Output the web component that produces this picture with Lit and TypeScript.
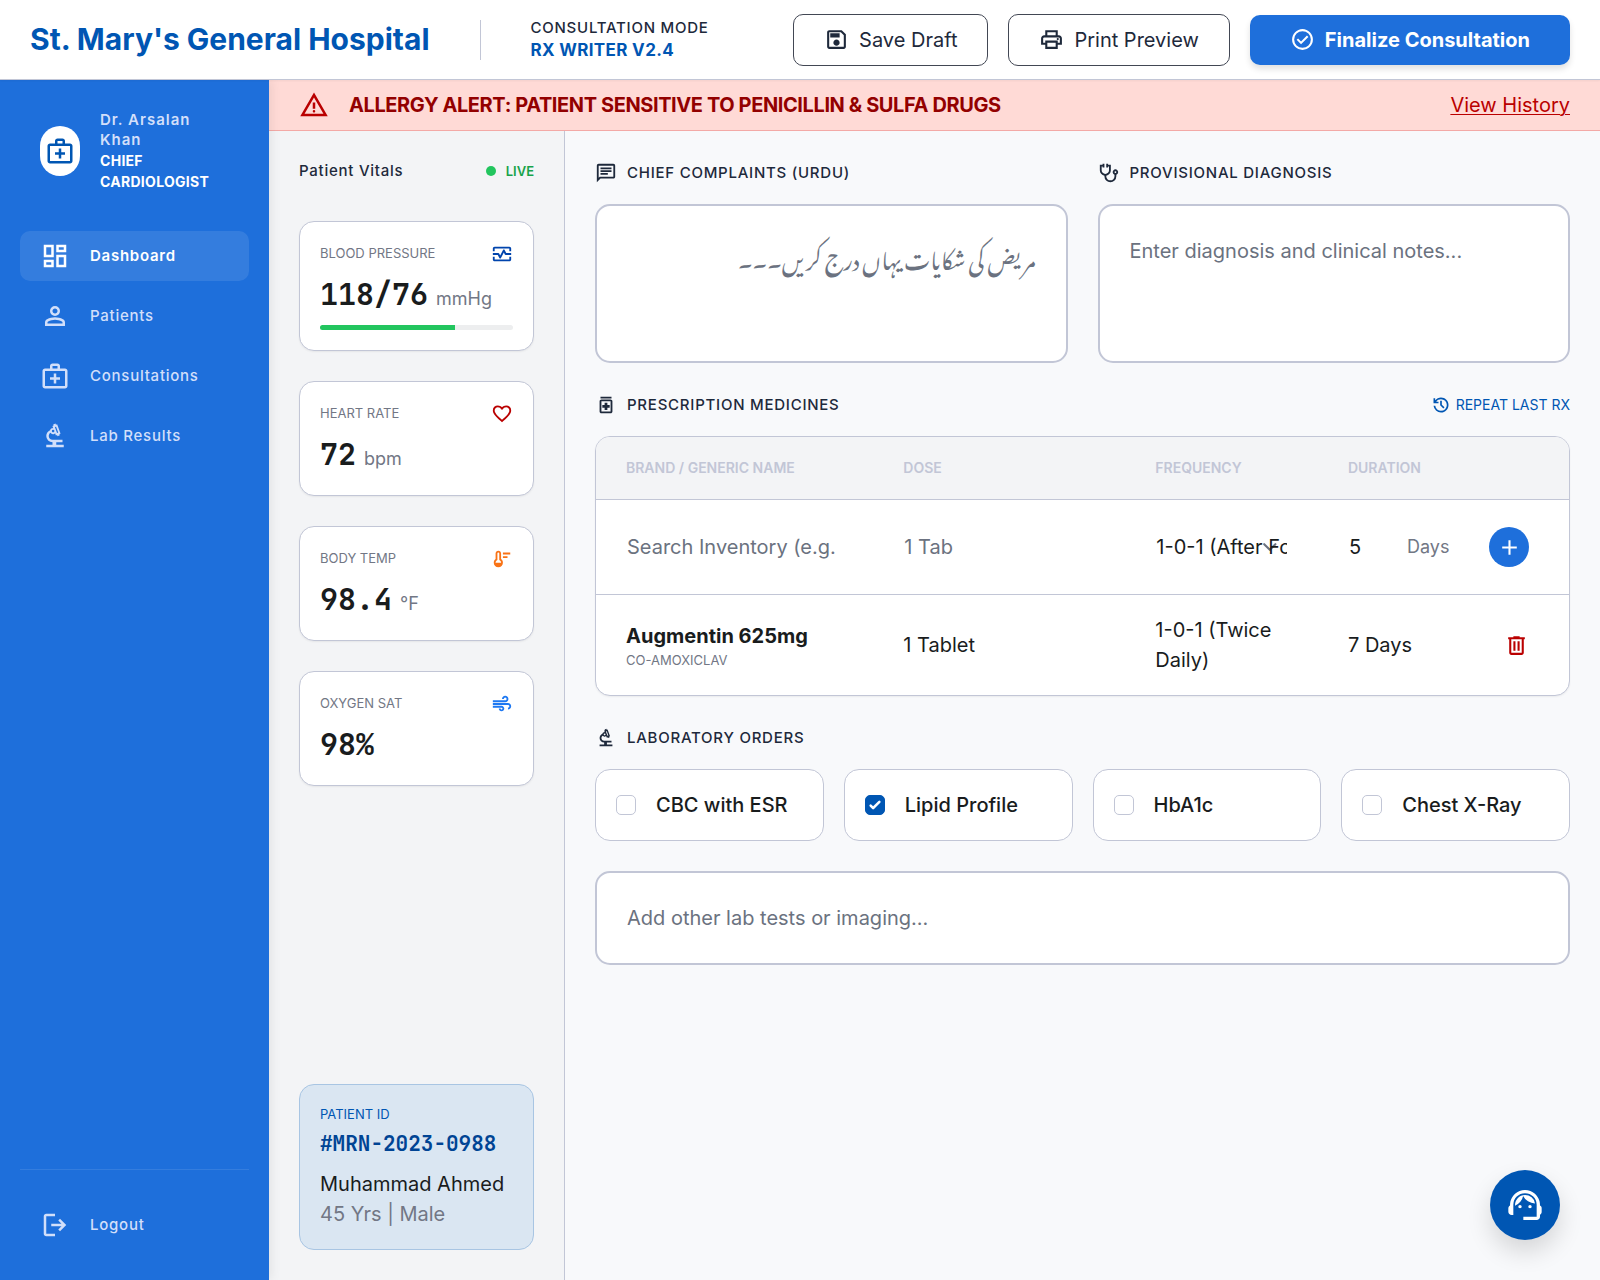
import { LitElement, html, css, svg } from "lit";
import { customElement, property, state } from "lit/decorators.js";
import { classMap } from "lit/directives/class-map.js";
import { styleMap } from "lit/directives/style-map.js";

const ICONS: Record<string, string> = {
  medical:
    "M520-560h-80v120H320v80h120v120h80v-120h120v-80H520v-120ZM160-80q-33 0-56.500-23.500T80-160v-480q0-33 23.500-56.500T160-720h160v-80q0-33 23.500-56.500T400-880h160q33 0 56.500 23.500T640-800v80h160q33 0 56.500 23.500T880-640v480q0 33-23.500 56.500T800-80H160Zm0-80h640v-480H160v480Zm240-560h160v-80H400v80Z",
  dashboard:
    "M520-600v-240h320v240H520ZM120-440v-400h320v400H120Zm400 320v-400h320v400H520Zm-400 0v-240h320v240H120Zm80-400h160v-240H200v240Zm400 320h160v-240H600v240Zm0-480h160v-80H600v80ZM200-200h160v-80H200v80Z",
  person:
    "M480-480q-66 0-113-47t-47-113q0-66 47-113t113-47q66 0 113 47t47 113q0 66-47 113t-113 47ZM160-160v-112q0-34 17.500-62.500T224-378q62-31 126-46.500T480-440q66 0 130 15.500T736-378q29 15 46.500 43.500T800-272v112H160Zm80-80h480v-32q0-11-5.500-20T700-306q-54-27-109-40.500T480-360q-56 0-111 13.500T260-306q-9 5-14.500 14t-5.500 20v32Zm240-320q33 0 56.500-23.500T560-640q0-33-23.500-56.500T480-720q-33 0-56.500 23.500T400-640q0 33 23.500 56.500T480-560Z",
  biotech:
    "M200-120v-80h200v-80q-83 0-141.500-58.500T200-480q0-61 33.500-111t89.500-73q8-34 35.500-55t61.500-21l-22-62 38-14-14-36 76-28 12 38 38-14 110 300-38 14 14 38-76 28-12-38-38 14-24-66q-15 14-34.500 21t-39.500 5q-22-2-41-13.500T336-582q-27 15-41.500 43T280-480q0 50 35 85t85 35h320v80H520v80h240v80H200Zm346-458 36-14-68-188-38 14 70 188Zm-126-22q17 0 28.500-11.500T460-640q0-17-11.500-28.500T420-680q-17 0-28.500 11.500T380-640q0 17 11.500 28.500T420-600Z",
  logout:
    "M200-120q-33 0-56.500-23.500T120-200v-560q0-33 23.500-56.500T200-840h280v80H200v560h280v80H200Zm440-160-55-58 102-102H360v-80h327L585-622l55-58 200 200-200 200Z",
  save:
    "M840-680v480q0 33-23.500 56.500T760-120H200q-33 0-56.500-23.500T120-200v-560q0-33 23.500-56.500T200-840h480l160 160Zm-80 34L646-760H200v560h560v-446ZM480-240q50 0 85-35t35-85q0-50-35-85t-85-35q-50 0-85 35t-35 85q0 50 35 85t85 35ZM240-560h360v-160H240v160Z",
  print:
    "M640-640v-120H320v120h-80v-200h480v200h-80Zm80 180q17 0 28.500-11.500T760-500q0-17-11.500-28.500T720-540q-17 0-28.500 11.500T680-500q0 17 11.500 28.500T720-460Zm-80 260v-160H320v160h320Zm80 80H240v-160H80v-240q0-51 35-85.500t85-34.500h560q51 0 85.500 34.500T880-520v240H720v160Zm80-240v-160q0-17-11.500-28.500T760-560H200q-17 0-28.500 11.500T160-520v160h80v-80h480v80h80Z",
  check:
    "m424-296 282-282-56-56-226 226-114-114-56 56 170 170Zm56 216q-83 0-156-31.500T197-197q-54-54-85.500-127T80-480q0-83 31.500-156T197-763q54-54 127-85.500T480-880q83 0 156 31.500T763-763q54 54 85.500 127T880-480q0 83-31.500 156T763-197q-54 54-127 85.500T480-80Zm0-80q134 0 227-93t93-227q0-134-93-227t-227-93q-134 0-227 93t-93 227q0 134 93 227t227 93Z",
  warning:
    "m40-120 440-760 440 760H40Zm138-80h604L480-720 178-200Zm302-40q17 0 28.500-11.500T520-280q0-17-11.500-28.500T480-320q-17 0-28.500 11.500T440-280q0 17 11.500 28.500T480-240Zm-40-120h80v-200h-80v200Z",
  chat:
    "M240-400h320v-80H240v80Zm0-120h480v-80H240v80Zm0-120h480v-80H240v80ZM80-80v-720q0-33 23.500-56.500T160-880h640q33 0 56.500 23.500T880-800v480q0 33-23.500 56.500T800-240H240L80-80Zm126-240h594v-480H160v525l46-45Z",
  stethoscope:
    "M540-80q-108 0-184-76t-76-184v-23q-86-14-143-80.500T80-600v-240h120v-40h80v160h-80v-40h-40v160q0 66 47 113t113 47q66 0 113-47t47-113v-160h-40v40h-80v-160h80v40h120v240q0 90-57 156.500T360-363v23q0 75 52.500 127.500T540-160q75 0 127.500-52.500T720-340v-67q-35-12-57.500-43T640-520q0-50 35-85t85-35q50 0 85 35t35 85q0 39-22.500 70T800-407v67q0 108-76 184T540-80Zm220-400q17 0 28.500-11.500T800-520q0-17-11.500-28.500T760-560q-17 0-28.500 11.500T720-520q0 17 11.500 28.500T760-480Z",
  medication:
    "M420-260h120v-100h100v-120H540v-100H420v100H320v120h100v100ZM280-120q-33 0-56.500-23.500T200-200v-440q0-33 23.500-56.500T280-720h400q33 0 56.500 23.500T760-640v440q0 33-23.500 56.500T680-120H280Zm0-80h400v-440H280v440Zm-40-560v-80h480v80H240Z",
  history:
    "M480-120q-138 0-240.500-91.500T122-440h82q14 104 92.500 172T480-200q117 0 198.500-81.500T760-480q0-117-81.500-198.500T480-760q-69 0-129 32t-101 88h110v80H120v-240h80v94q51-64 124.500-99T480-840q75 0 140.500 28.500t114 77q48.500 48.500 77 114T840-480q0 75-28.500 140.500t-77 114q-48.500 48.500-114 77T480-120Zm112-192L440-464v-216h80v184l128 128-56 56Z",
  add: "M440-440H200v-80h240v-240h80v240h240v80H520v240h-80v-240Z",
  trash:
    "M280-120q-33 0-56.500-23.500T200-200v-520h-40v-80h200v-40h240v40h200v80h-40v520q0 33-23.500 56.500T680-120H280Zm400-600H280v520h400v-520ZM360-280h80v-360h-80v360Zm160 0h80v-360h-80v360Z",
  pulse:
    "M80-600v-120q0-33 23.500-56.500T160-800h640q33 0 56.500 23.500T880-720v120h-80v-120H160v120H80Zm80 440q-33 0-56.500-23.500T80-240v-120h80v120h640v-120h80v120q0 33-23.500 56.500T800-160H160Zm240-120q11 0 21-6t15-16l124-248 44 88q5 10 15 16t21 6h240v-80H665l-69-138q-5-11-15-15.500t-21-4.500q-11 0-21 4.500T524-658L400-410l-44-88q-5-10-15-16t-21-6H80v80h215l69 138q5 10 15 16t21 6Z",
  heart:
    "m480-120-58-52q-101-91-167-157T150-447.500Q111-500 95.500-544T80-634q0-94 63-157t157-63q52 0 99 22t81 62q34-40 81-62t99-22q94 0 157 63t63 157q0 46-15.500 90T810-447.500Q771-395 705-329T538-172l-58 52Zm0-108q96-86 158-147.500t98-107q36-45.500 50-81t14-70.500q0-60-40-100t-100-40q-47 0-87 26.500T518-680h-76q-15-41-55-67.500T300-774q-60 0-100 40t-40 100q0 35 14 70.500t50 81q36 45.500 98 107T480-228Z",
  thermostat:
    "M520-520v-80h200v80H520Zm0-160v-80h320v80H520ZM320-120q-83 0-141.500-58.500T120-320q0-48 21-89.500t59-70.500v-240q0-50 35-85t85-35q50 0 85 35t35 85v240q38 29 59 70.500t21 89.500q0 83-58.500 141.500T320-120ZM200-320h240q0-29-12.500-54T392-416l-32-24v-280q0-17-11.500-28.500T320-760q-17 0-28.500 11.500T280-720v280l-32 24q-23 17-35.500 42T200-320Z",
  air:
    "M460-160q-50 0-85-35t-35-85h80q0 17 11.500 28.500T460-240q17 0 28.500-11.500T500-280q0-17-11.500-28.500T460-320H80v-80h380q50 0 85 35t35 85q0 50-35 85t-85 35ZM80-560v-80h540q26 0 43-17t17-43q0-26-17-43t-43-17q-26 0-43 17t-17 43h-80q0-59 40.500-99.500T620-840q59 0 99.500 40.500T760-700q0 59-40.500 99.500T620-560H80Zm660 320v-80q26 0 43-17t17-43q0-26-17-43t-43-17H80v-80h660q59 0 99.500 40.500T880-380q0 59-40.500 99.500T740-240Z",
  agent:
    "M440-120v-80h320v-284q0-117-81.500-198.500T480-764q-117 0-198.500 81.500T200-484v244h-40q-33 0-56.500-23.500T80-320v-80q0-21 10.500-39.500T120-469l3-53q8-68 39.500-126t79-101q47.500-43 109-67T480-840q68 0 129 24t109 66.500Q766-707 797-649t40 126l3 52q19 9 29.500 27t10.500 38v92q0 20-10.500 38T840-249v49q0 33-23.500 56.500T760-120H440Zm-80-280q-17 0-28.500-11.500T320-440q0-17 11.500-28.500T360-480q17 0 28.500 11.500T400-440q0 17-11.500 28.500T360-400Zm240 0q-17 0-28.500-11.500T560-440q0-17 11.500-28.500T600-480q17 0 28.500 11.500T640-440q0 17-11.500 28.500T600-400Zm-359-62q-7-106 64-182t177-76q89 0 156.500 56.500T720-519q-91-1-167.500-49T435-698q-16 80-67.500 142.500T241-462Z",
};

@customElement("ui-icon")
class UiIcon extends LitElement {
  static styles = css`
    :host {
      display: block;
      flex: none;
      width: 22px;
      height: 22px;
    }
    svg {
      display: block;
      width: 100%;
      height: 100%;
      fill: currentColor;
    }
  `;
  @property() name = "";
  render() {
    return html`<svg viewBox="0 -960 960 960" aria-hidden="true">
      ${svg`<path d=${ICONS[this.name] ?? ""}></path>`}
    </svg>`;
  }
}

interface Vital {
  label: string;
  value: string;
  unit: string;
  icon: string;
  tone: string;
  level?: number;
}

const NAV = [
  { label: "Dashboard", icon: "dashboard" },
  { label: "Patients", icon: "person" },
  { label: "Consultations", icon: "medical" },
  { label: "Lab Results", icon: "biotech" },
];

const VITALS: Vital[] = [
  { label: "Blood Pressure", value: "118/76", unit: "mmHg", icon: "pulse", tone: "navy", level: 70 },
  { label: "Heart Rate", value: "72", unit: "bpm", icon: "heart", tone: "red" },
  { label: "Body Temp", value: "98.4", unit: "°F", icon: "thermostat", tone: "orange" },
  { label: "Oxygen Sat", value: "98%", unit: "", icon: "air", tone: "sky" },
];

@customElement("app-root")
class AppRoot extends LitElement {
  static styles = css`
    :host {
      --primary: #0056b3;
      --brand: #1e6fdb;
      --line: #c2c6d6;
      --ink: #191c1d;
      --slate: #1e293b;
      --muted: #727785;
      --hint: #6b7280;
      --danger: #ba0000;
      display: block;
      font-family: Inter, "Liberation Sans", sans-serif;
      font-size: 20px;
      line-height: 30px;
      color: var(--ink);
    }
    * {
      box-sizing: border-box;
    }
    button,
    input,
    textarea,
    select {
      font: inherit;
      color: inherit;
      margin: 0;
    }
    button {
      cursor: pointer;
      border: 0;
      background: none;
      padding: 0;
    }
    h1,
    h2,
    p {
      margin: 0;
      font: inherit;
    }
    .shell {
      display: flex;
      flex-direction: column;
      min-height: 100vh;
      background: #f8f9fb;
    }

    .topbar {
      display: flex;
      align-items: center;
      justify-content: space-between;
      gap: 20px;
      height: 80px;
      padding: 0 30px;
      background: #fff;
      border-bottom: 1px solid var(--line);
      box-shadow: 0 1px 2px rgba(0, 0, 0, 0.05);
      position: relative;
      z-index: 2;
    }
    .brand {
      display: flex;
      align-items: center;
      gap: 50px;
    }
    .topbar h1 {
      padding-bottom: 2px;
      font-size: 30px;
      font-weight: 700;
      line-height: 40px;
      color: var(--primary);
    }
    .rule {
      width: 1px;
      height: 40px;
      background: var(--line);
    }
    .mode {
      padding-bottom: 2px;
      font-size: 15px;
      line-height: 23px;
      font-weight: 500;
      letter-spacing: 0.05em;
      color: var(--slate);
      text-transform: uppercase;
    }
    .mode strong {
      display: block;
      font-size: 17px;
      font-weight: 700;
      letter-spacing: 0.02em;
      color: var(--primary);
    }
    .actions {
      display: flex;
      align-items: center;
      gap: 20px;
    }
    .btn {
      display: flex;
      align-items: center;
      gap: 10px;
      padding: 10px 30px;
      border: 1px solid #424754;
      border-radius: 10px;
      color: var(--slate);
    }
    .btn ui-icon,
    .add ui-icon,
    .remove ui-icon {
      width: 25px;
      height: 25px;
    }
    .btn.solid {
      border: 0;
      padding: 10px 40px;
      background: var(--brand);
      color: #fff;
      font-weight: 700;
      box-shadow: 0 4px 6px rgba(0, 0, 0, 0.12);
    }

    .body {
      flex: 1;
      display: grid;
      grid-template-columns: 269px minmax(0, 1fr);
    }
    .sidebar {
      display: flex;
      flex-direction: column;
      padding: 30px 20px;
      background: var(--brand);
      color: #d2dffa;
      box-shadow: 2px 0 10px rgba(0, 0, 0, 0.08);
      position: relative;
      z-index: 1;
    }
    .doctor {
      display: flex;
      align-items: center;
      gap: 20px;
      padding: 0 20px;
      margin-bottom: 39px;
      font-size: 15px;
      line-height: 20px;
      font-weight: 600;
      letter-spacing: 1px;
    }
    .avatar {
      flex: none;
      display: grid;
      place-items: center;
      width: 40px;
      height: 50px;
      border-radius: 25px;
      background: #fff;
      color: var(--primary);
    }
    .avatar ui-icon,
    .nav ui-icon,
    .alert ui-icon {
      width: 30px;
      height: 30px;
    }
    .role {
      font-size: 14px;
      line-height: 21px;
      font-weight: 700;
      letter-spacing: 0.02em;
      color: #fff;
      text-transform: uppercase;
    }
    .nav {
      display: flex;
      flex-direction: column;
      gap: 10px;
    }
    .nav a {
      display: flex;
      align-items: center;
      gap: 20px;
      padding: 10px 20px;
      border-radius: 10px;
      color: inherit;
      text-decoration: none;
      font-size: 15px;
      font-weight: 500;
      letter-spacing: 0.05em;
    }
    .nav a.active {
      background: rgba(255, 255, 255, 0.1);
      color: #fff;
      font-weight: 600;
    }
    .nav.foot {
      margin-top: auto;
      padding-top: 30px;
      border-top: 1px solid rgba(255, 255, 255, 0.1);
    }

    .content {
      display: flex;
      flex-direction: column;
      min-width: 0;
    }
    .alert {
      display: flex;
      align-items: center;
      gap: 20px;
      padding: 10px 30px;
      background: #ffdad6;
      border-bottom: 1px solid #f3a9a6;
      color: var(--danger);
    }
    .alert p {
      flex: 1;
      font-weight: 700;
      letter-spacing: -0.02em;
      color: #930000;
      text-transform: uppercase;
    }
    .alert a {
      color: inherit;
      text-decoration-thickness: 1px;
      text-underline-offset: 2px;
    }
    .columns {
      flex: 1;
      display: grid;
      grid-template-columns: 296px minmax(0, 1fr);
    }

    .vitals {
      display: flex;
      flex-direction: column;
      gap: 30px;
      padding: 30px;
      background: #f3f4f6;
      border-right: 1px solid var(--line);
    }
    .vitals-head {
      display: flex;
      align-items: center;
      justify-content: space-between;
      height: 20px;
      margin-bottom: 10px;
      font-size: 15px;
      font-weight: 500;
      letter-spacing: 0.05em;
      color: var(--slate);
    }
    .live {
      display: flex;
      align-items: center;
      gap: 10px;
      font-size: 13px;
      font-weight: 600;
      letter-spacing: 0;
      color: #16a34a;
    }
    .live::before {
      content: "";
      width: 10px;
      height: 10px;
      border-radius: 50%;
      background: #22c55e;
    }
    .card {
      background: #fff;
      border: 1px solid var(--line);
      border-radius: 15px;
    }
    .vital {
      padding: 20px;
      box-shadow: 0 1px 2px rgba(0, 0, 0, 0.06);
    }
    .vital-top {
      display: flex;
      align-items: center;
      justify-content: space-between;
      height: 23px;
      margin-bottom: 10px;
    }
    .caption {
      font-size: 13px;
      line-height: 19px;
      color: var(--muted);
      text-transform: uppercase;
    }
    .vital-value {
      display: flex;
      align-items: baseline;
      gap: 8px;
      height: 40px;
      line-height: 38px;
    }
    .mono {
      font-family: "JetBrains Mono", "DejaVu Sans Mono", "Liberation Mono", monospace;
      font-weight: 700;
    }
    .vital-value .mono {
      font-size: 30px;
    }
    .vital-value .unit {
      font-size: 18px;
      color: var(--muted);
    }
    .meter {
      height: 5px;
      margin-top: 10px;
      border-radius: 5px;
      overflow: hidden;
      background: #edeeef;
    }
    .meter div {
      height: 100%;
      background: #22c55e;
    }
    .navy {
      color: #0044ad;
    }
    .red {
      color: #ba0000;
    }
    .orange {
      color: #f97316;
    }
    .sky {
      color: #1d78f2;
    }
    .patient {
      margin-top: auto;
      padding: 20px;
      background: #dae6f2;
      border-color: #a8c5e3;
    }
    .patient .caption {
      color: var(--primary);
      margin-bottom: 5px;
    }
    .patient .mono {
      font-size: 21px;
      color: #004494;
      margin-bottom: 10px;
    }
    .patient .meta {
      color: var(--muted);
    }

    .workspace {
      display: flex;
      flex-direction: column;
      gap: 30px;
      padding: 30px;
      min-width: 0;
    }
    .notes {
      display: grid;
      grid-template-columns: 1fr 1fr;
      gap: 30px;
    }
    .block {
      display: flex;
      flex-direction: column;
      gap: 20px;
      min-width: 0;
    }
    .heading {
      display: flex;
      align-items: center;
      gap: 10px;
      height: 23px;
      font-size: 15px;
      font-weight: 500;
      letter-spacing: 0.05em;
      color: var(--slate);
      text-transform: uppercase;
    }
    .heading-row {
      display: flex;
      align-items: center;
      justify-content: space-between;
    }
    .repeat {
      display: flex;
      align-items: center;
      gap: 5px;
      height: 23px;
      font-size: 14px;
      color: var(--primary);
      text-transform: uppercase;
    }
    .repeat ui-icon {
      width: 20px;
      height: 20px;
    }
    .field {
      display: block;
      width: 100%;
      padding: 30px;
      border: 2px solid var(--line);
      border-radius: 15px;
      background: #fff;
      resize: none;
      outline: none;
    }
    textarea.field {
      height: 159px;
    }
    .urdu {
      font-family: "Noto Nastaliq Urdu", "DejaVu Sans", sans-serif;
      font-size: 22px;
      line-height: 40px;
    }
    ::placeholder {
      color: var(--hint);
      opacity: 1;
    }

    .table-wrap {
      overflow: hidden;
      box-shadow: 0 1px 2px rgba(0, 0, 0, 0.06);
    }
    table {
      width: 100%;
      table-layout: fixed;
      border-collapse: separate;
      border-spacing: 0;
    }
    th,
    td {
      padding: 20px 30px;
      text-align: left;
      font-weight: 400;
    }
    th {
      height: 63px;
      padding: 0 30px;
      background: #f3f4f6;
      border-bottom: 1px solid var(--line);
      font-size: 14px;
      font-weight: 600;
      line-height: 20px;
      color: var(--line);
      text-transform: uppercase;
    }
    .c-name {
      width: 28.5%;
    }
    .c-dose {
      width: 25.9%;
    }
    .c-freq {
      width: 19.8%;
    }
    .c-dur {
      width: 16.6%;
    }
    .entry td {
      height: 95px;
      border-bottom: 1px solid var(--line);
    }
    .cell-input,
    .cell-select {
      display: block;
      width: 100%;
      min-width: 0;
      height: 32px;
      padding: 0;
      border: 1px solid transparent;
      background: transparent;
      outline: none;
    }
    .cell-select {
      appearance: none;
    }
    .picker {
      display: grid;
    }
    .picker > * {
      grid-area: 1 / 1;
    }
    .chevron {
      justify-self: end;
      align-self: center;
      width: 28px;
      height: 28px;
    }
    .duration {
      display: flex;
      align-items: center;
    }
    .duration .cell-input {
      flex: 1;
    }
    .duration span {
      font-size: 18px;
      color: var(--muted);
    }
    td.act {
      padding: 0 40px 0 0;
    }
    .add {
      display: grid;
      place-items: center;
      width: 40px;
      height: 40px;
      margin-left: auto;
      border-radius: 50%;
      background: var(--brand);
      color: #fff;
    }
    .remove {
      display: block;
      margin-left: auto;
      color: var(--danger);
    }
    .drug {
      font-weight: 700;
    }

    .labs {
      display: grid;
      grid-template-columns: repeat(4, 1fr);
      gap: 20px;
      margin-bottom: 10px;
    }
    .lab {
      display: flex;
      align-items: center;
      gap: 20px;
      padding: 20px;
      font-weight: 500;
      cursor: pointer;
    }
    .tick {
      display: grid;
      flex: none;
      width: 20px;
      height: 20px;
    }
    .tick > * {
      grid-area: 1 / 1;
    }
    .tick input {
      appearance: none;
      width: 20px;
      height: 20px;
      border: 1px solid var(--line);
      border-radius: 5px;
      background: #fff;
    }
    .tick input:checked {
      background: var(--primary);
      border-color: var(--primary);
    }
    .tick svg {
      width: 20px;
      height: 20px;
      pointer-events: none;
    }
    .fab {
      position: fixed;
      right: 40px;
      bottom: 40px;
      z-index: 3;
      display: grid;
      place-items: center;
      width: 70px;
      height: 70px;
      border-radius: 50%;
      background: var(--primary);
      color: #fff;
      box-shadow: 0 12px 24px rgba(0, 0, 0, 0.14);
    }
    .fab ui-icon {
      width: 40px;
      height: 40px;
    }
  `;

  @state() private active = "Dashboard";
  @state() private labs = [
    { name: "CBC with ESR", on: false },
    { name: "Lipid Profile", on: true },
    { name: "HbA1c", on: false },
    { name: "Chest X-Ray", on: false },
  ];

  private toggleLab(index: number) {
    this.labs = this.labs.map((lab, i) => (i === index ? { ...lab, on: !lab.on } : lab));
  }

  private select(event: Event, label: string) {
    event.preventDefault();
    this.active = label;
  }

  private renderVital(v: Vital) {
    return html`<section class="card vital">
      <div class="vital-top">
        <span class="caption">${v.label}</span>
        <ui-icon class=${v.tone} name=${v.icon}></ui-icon>
      </div>
      <div class="vital-value">
        <span class="mono">${v.value}</span>
        ${v.unit ? html`<span class="unit">${v.unit}</span>` : ""}
      </div>
      ${v.level
        ? html`<div class="meter"><div style=${styleMap({ width: `${v.level}%` })}></div></div>`
        : ""}
    </section>`;
  }

  private renderSidebar() {
    return html`<aside class="sidebar">
      <div class="doctor">
        <div class="avatar"><ui-icon name="medical"></ui-icon></div>
        <div>
          <div>Dr. Arsalan Khan</div>
          <div class="role">Chief Cardiologist</div>
        </div>
      </div>
      <nav class="nav">
        ${NAV.map(
          (item) => html`<a
            href="#"
            class=${classMap({ active: item.label === this.active })}
            @click=${(e: Event) => this.select(e, item.label)}
            ><ui-icon name=${item.icon}></ui-icon>${item.label}</a
          >`
        )}
      </nav>
      <div class="nav foot">
        <a href="#"><ui-icon name="logout"></ui-icon>Logout</a>
      </div>
    </aside>`;
  }

  private renderTable() {
    return html`<div class="card table-wrap">
      <table>
        <thead>
          <tr>
            <th class="c-name">Brand / Generic Name</th>
            <th class="c-dose">Dose</th>
            <th class="c-freq">Frequency</th>
            <th class="c-dur">Duration</th>
            <th></th>
          </tr>
        </thead>
        <tbody>
          <tr class="entry">
            <td>
              <input class="cell-input" type="text" aria-label="Brand / Generic Name" placeholder="Search Inventory (e.g." />
            </td>
            <td><input class="cell-input" type="text" aria-label="Dose" placeholder="1 Tab" /></td>
            <td>
              <div class="picker">
                <svg class="chevron" viewBox="0 0 20 20" aria-hidden="true">
                  <path d="M3 8l4 4 4-4" fill="none" stroke="#6b7280" stroke-width="1.500" stroke-linecap="round" stroke-linejoin="round"></path>
                </svg>
                <select class="cell-select" aria-label="Frequency">
                  <option>1-0-1 (After Food)</option>
                </select>
              </div>
            </td>
            <td>
              <div class="duration">
                <input class="cell-input" type="text" inputmode="numeric" aria-label="Duration" value="5" />
                <span>Days</span>
              </div>
            </td>
            <td class="act">
              <button class="add" aria-label="Add"><ui-icon name="add"></ui-icon></button>
            </td>
          </tr>
          <tr>
            <td>
              <div class="drug">Augmentin 625mg</div>
              <div class="caption">Co-Amoxiclav</div>
            </td>
            <td>1 Tablet</td>
            <td>1-0-1 (Twice Daily)</td>
            <td>7 Days</td>
            <td class="act">
              <button class="remove" aria-label="Delete"><ui-icon name="trash"></ui-icon></button>
            </td>
          </tr>
        </tbody>
      </table>
    </div>`;
  }

  render() {
    return html`<div class="shell">
      <header class="topbar">
        <div class="brand">
          <h1>St. Mary's General Hospital</h1>
          <div class="rule"></div>
          <div class="mode">Consultation Mode<strong>Rx Writer v2.4</strong></div>
        </div>
        <div class="actions">
          <button class="btn"><ui-icon name="save"></ui-icon>Save Draft</button>
          <button class="btn"><ui-icon name="print"></ui-icon>Print Preview</button>
          <button class="btn solid"><ui-icon name="check"></ui-icon>Finalize Consultation</button>
        </div>
      </header>
      <div class="body">
        ${this.renderSidebar()}
        <div class="content">
          <div class="alert" role="alert">
            <ui-icon name="warning"></ui-icon>
            <p>Allergy Alert: Patient sensitive to Penicillin &amp; Sulfa drugs</p>
            <a href="#">View History</a>
          </div>
          <div class="columns">
            <aside class="vitals">
              <div class="vitals-head">
                <h2>Patient Vitals</h2>
                <span class="live">LIVE</span>
              </div>
              ${VITALS.map((v) => this.renderVital(v))}
              <section class="card patient">
                <div class="caption">Patient ID</div>
                <div class="mono">#MRN-2023-0988</div>
                <div>Muhammad Ahmed</div>
                <div class="meta">45 Yrs | Male</div>
              </section>
            </aside>
            <main class="workspace">
              <div class="notes">
                <div class="block">
                  <label class="heading" for="complaints"><ui-icon name="chat"></ui-icon>Chief Complaints (Urdu)</label>
                  <textarea id="complaints" class="field urdu" dir="rtl" lang="ur" placeholder="مریض کی شکایات یہاں درج کریں۔۔۔"></textarea>
                </div>
                <div class="block">
                  <label class="heading" for="diagnosis"><ui-icon name="stethoscope"></ui-icon>Provisional Diagnosis</label>
                  <textarea id="diagnosis" class="field" placeholder="Enter diagnosis and clinical notes..."></textarea>
                </div>
              </div>
              <section class="block">
                <div class="heading-row">
                  <h2 class="heading"><ui-icon name="medication"></ui-icon>Prescription Medicines</h2>
                  <button class="repeat"><ui-icon name="history"></ui-icon>Repeat Last Rx</button>
                </div>
                ${this.renderTable()}
              </section>
              <section class="block">
                <h2 class="heading"><ui-icon name="biotech"></ui-icon>Laboratory Orders</h2>
                <div class="labs">
                  ${this.labs.map(
                    (lab, i) => html`<label class="card lab">
                      <span class="tick">
                        <input type="checkbox" .checked=${lab.on} @change=${() => this.toggleLab(i)} />
                        ${lab.on
                          ? html`<svg viewBox="0 0 16 16" aria-hidden="true">
                              <path d="M12.207 4.793a1 1 0 010 1.414l-5 5a1 1 0 01-1.414 0l-2-2a1 1 0 011.414-1.414L6.500 9.086l4.293-4.293a1 1 0 011.414 0z" fill="#fff"></path>
                            </svg>`
                          : ""}
                      </span>
                      ${lab.name}
                    </label>`
                  )}
                </div>
                <input class="field" type="text" aria-label="Other lab tests" placeholder="Add other lab tests or imaging..." />
              </section>
            </main>
          </div>
        </div>
      </div>
      <button class="fab" aria-label="Support"><ui-icon name="agent"></ui-icon></button>
    </div>`;
  }
}
